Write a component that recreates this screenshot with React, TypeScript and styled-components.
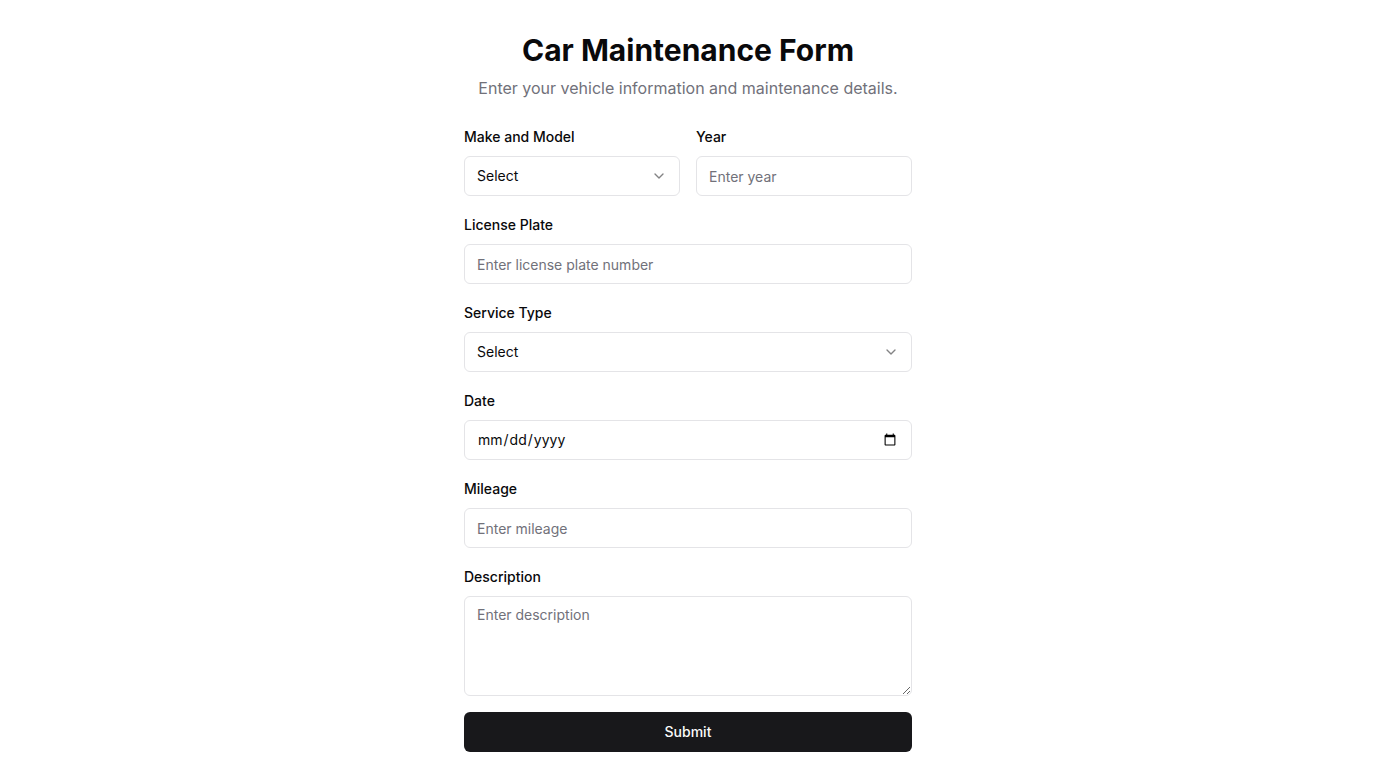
import React from "react";
import styled, { createGlobalStyle } from "styled-components";
import { ChevronDown } from "lucide-react";

const GlobalStyle = createGlobalStyle`
  html, body {
    margin: 0;
    padding: 0;
    background: #ffffff;
    font-family: Inter, "Liberation Sans", sans-serif;
    color: #09090b;
  }
  * { box-sizing: border-box; }
`;

const Page = styled.main`
  width: 448px;
  margin: 0 auto;
  padding-top: 32px;
  padding-bottom: 32px;
`;

const Header = styled.header`
  display: flex;
  flex-direction: column;
  align-items: center;
  gap: 8px;
  margin-bottom: 27px;
`;

const Title = styled.h1`
  margin: 0;
  font-size: 30px;
  line-height: 36px;
  font-weight: 700;
  color: #09090b;
`;

const Subtitle = styled.p`
  margin: 0;
  font-size: 16px;
  line-height: 24px;
  color: #71717a;
`;

const Form = styled.form`
  display: flex;
  flex-direction: column;
  gap: 19px;
`;

const Row = styled.div`
  display: grid;
  grid-template-columns: 1fr 1fr;
  gap: 16px;
`;

const Field = styled.div`
  display: flex;
  flex-direction: column;
  gap: 9px;
`;

const Label = styled.label`
  font-size: 14px;
  line-height: 20px;
  font-weight: 500;
  color: #09090b;
`;

const controlBase = `
  width: 100%;
  border: 1px solid #e4e4e7;
  border-radius: 6px;
  background: #ffffff;
  font-family: Inter, "Liberation Sans", sans-serif;
  font-size: 14px;
  color: #09090b;
  outline: none;
`;

const Input = styled.input`
  ${controlBase}
  height: 40px;
  padding: 8px 12px;
  line-height: 20px;
  &::placeholder { color: #71717a; }
`;

const SelectTrigger = styled.button`
  ${controlBase}
  height: 40px;
  padding: 8px 12px;
  display: flex;
  align-items: center;
  justify-content: space-between;
  text-align: left;
  line-height: 20px;
  cursor: pointer;
  svg { opacity: 0.5; flex-shrink: 0; }
`;

const TextArea = styled.textarea`
  ${controlBase}
  height: 100px;
  padding: 8px 12px;
  line-height: 20px;
  display: block;
  &::placeholder { color: #71717a; }
`;

const Actions = styled.div`
  margin-top: -3px;
`;

const SubmitButton = styled.button`
  width: 100%;
  height: 40px;
  border: none;
  border-radius: 6px;
  background: #18181b;
  color: #fafafa;
  font-family: Inter, "Liberation Sans", sans-serif;
  font-size: 14px;
  font-weight: 500;
  padding: 0 16px 2px;
  cursor: pointer;
`;

function Select({ id }: { id: string }) {
  return (
    <SelectTrigger type="button" id={id}>
      <span>Select</span>
      <ChevronDown size={16} strokeWidth={2} />
    </SelectTrigger>
  );
}

export default function App() {
  return (
    <>
      <GlobalStyle />
      <Page>
        <Header>
          <Title>Car Maintenance Form</Title>
          <Subtitle>Enter your vehicle information and maintenance details.</Subtitle>
        </Header>
        <Form onSubmit={(e) => e.preventDefault()}>
          <Row>
            <Field>
              <Label htmlFor="make">Make and Model</Label>
              <Select id="make" />
            </Field>
            <Field>
              <Label htmlFor="year">Year</Label>
              <Input id="year" placeholder="Enter year" />
            </Field>
          </Row>
          <Field>
            <Label htmlFor="plate">License Plate</Label>
            <Input id="plate" placeholder="Enter license plate number" />
          </Field>
          <Field>
            <Label htmlFor="service">Service Type</Label>
            <Select id="service" />
          </Field>
          <Field>
            <Label htmlFor="date">Date</Label>
            <Input id="date" type="date" />
          </Field>
          <Field>
            <Label htmlFor="mileage">Mileage</Label>
            <Input id="mileage" placeholder="Enter mileage" />
          </Field>
          <Field>
            <Label htmlFor="desc">Description</Label>
            <TextArea id="desc" placeholder="Enter description" />
          </Field>
          <Actions>
            <SubmitButton type="submit">Submit</SubmitButton>
          </Actions>
        </Form>
      </Page>
    </>
  );
}
